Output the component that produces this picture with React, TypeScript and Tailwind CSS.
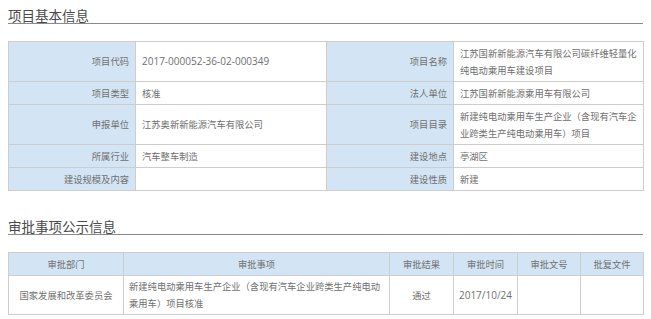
const font = { fontFamily: '"Noto Sans CJK SC", "Noto Sans", sans-serif' };

const basicRows: { l1: string; v1: string; l2: string; v2: string; tall?: boolean }[] = [
  {
    l1: "项目代码",
    v1: "2017-000052-36-02-000349",
    l2: "项目名称",
    v2: "江苏国新新能源汽车有限公司碳纤维轻量化纯电动乘用车建设项目",
    tall: true,
  },
  { l1: "项目类型", v1: "核准", l2: "法人单位", v2: "江苏国新新能源乘用车有限公司" },
  {
    l1: "申报单位",
    v1: "江苏奥新新能源汽车有限公司",
    l2: "项目目录",
    v2: "新建纯电动乘用车生产企业（含现有汽车企业跨类生产纯电动乘用车）项目",
    tall: true,
  },
  { l1: "所属行业", v1: "汽车整车制造", l2: "建设地点", v2: "亭湖区" },
  { l1: "建设规模及内容", v1: "", l2: "建设性质", v2: "新建" },
];

const approvalHead = ["审批部门", "审批事项", "审批结果", "审批时间", "审批文号", "批复文件"];

// digits in the page render wider than the CJK font's latin
const isNumeric = (s: string) => /^[0-9\-/]+$/.test(s);

function Title({ text }: { text: string }) {
  return (
    <div className="mx-2 border-b border-[#8a8a8a] pt-2 text-[13.5px] leading-[15px] text-[#4a4a4a]">
      {text}
    </div>
  );
}

function Num({ text }: { text: string }) {
  return <span className="font-['Open_Sans',sans-serif] text-[10px]">{text}</span>;
}

export default function App() {
  const label = "border border-[#cdcdcd] bg-[#d3e5f4] pl-[4px] pr-[6px] text-right align-middle";
  const value = "border border-[#cdcdcd] bg-white pl-[6px] pr-[3px] text-left align-middle";
  return (
    <div className="h-[319px] w-[651px] bg-white text-[9.3px] leading-[17px] text-[#707070]" style={font}>
      <Title text="项目基本信息" />
      <div className="mx-2 mt-[17px]">
        <table className="w-[635px] table-fixed border-collapse">
          <colgroup>
            <col className="w-[127px]" />
            <col className="w-[191px]" />
            <col className="w-[127px]" />
            <col className="w-[190px]" />
          </colgroup>
          <tbody>
            {basicRows.map((r) => (
              <tr key={r.l1} className={r.tall ? "h-[40px]" : "h-[23px]"}>
                <td className={label}>{r.l1}</td>
                <td className={value}>{isNumeric(r.v1) ? <Num text={r.v1} /> : r.v1}</td>
                <td className={label}>{r.l2}</td>
                <td className={value}>{r.v2}</td>
              </tr>
            ))}
          </tbody>
        </table>
      </div>

      <div className="mt-[20px]">
        <Title text="审批事项公示信息" />
      </div>
      <div className="mx-2 mt-[17px]">
        <table className="w-[635px] table-fixed border-collapse">
          <colgroup>
            <col className="w-[115px]" />
            <col className="w-[266px]" />
            <col className="w-[64px]" />
            <col className="w-[64px]" />
            <col className="w-[63px]" />
            <col className="w-[63px]" />
          </colgroup>
          <thead>
            <tr className="h-[23px]">
              {approvalHead.map((h) => (
                <th
                  key={h}
                  className="border border-[#cdcdcd] bg-[#d3e5f4] text-center align-middle font-normal"
                >
                  {h}
                </th>
              ))}
            </tr>
          </thead>
          <tbody>
            <tr className="h-[39px]">
              <td className="border border-[#cdcdcd] text-center align-middle">国家发展和改革委员会</td>
              <td className="border border-[#cdcdcd] pl-[5px] pr-[2px] align-middle">
                新建纯电动乘用车生产企业（含现有汽车企业跨类生产纯电动乘用车）项目核准
              </td>
              <td className="border border-[#cdcdcd] text-center align-middle">通过</td>
              <td className="border border-[#cdcdcd] text-center align-middle">
                <Num text="2017/10/24" />
              </td>
              <td className="border border-[#cdcdcd]"></td>
              <td className="border border-[#cdcdcd]"></td>
            </tr>
          </tbody>
        </table>
      </div>
    </div>
  );
}
